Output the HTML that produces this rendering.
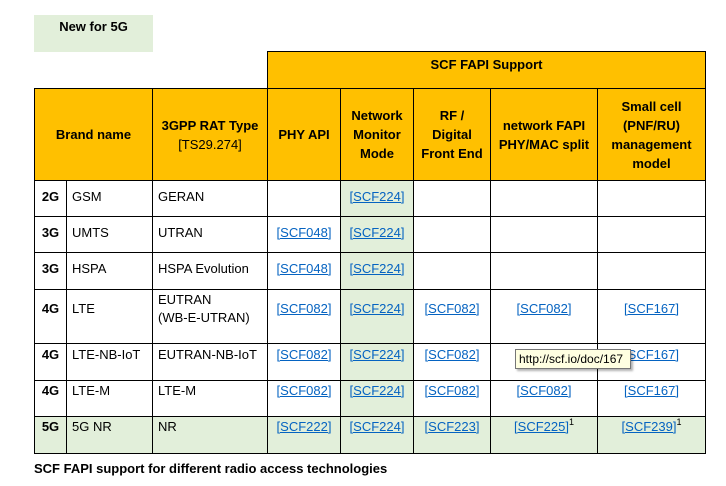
<!DOCTYPE html>
<html><head><meta charset="utf-8"><style>
body{margin:0;width:726px;height:486px;background:#fff;position:relative;overflow:hidden;font-family:"Liberation Sans",sans-serif;font-size:13px;color:#000}
.c{position:absolute;box-sizing:border-box;border:1px solid #000;padding-top:7px;text-align:center;line-height:18px}
.o{background:#ffc000;font-weight:bold}
.g{background:#e2efda}
.h{display:flex;align-items:center;justify-content:center;padding-top:0;line-height:19px}
.l{text-align:left;padding-left:5px}
.b{font-weight:bold}
a{color:#0563c1;text-decoration:underline}
sup{font-size:9px;line-height:0;vertical-align:6px;color:#000}
</style></head><body>
<div style="position:absolute;left:34px;top:15px;width:119px;height:37px;background:#e2efda;font-weight:bold;text-align:center;padding-top:4px;box-sizing:border-box">New for 5G</div>

<div class="c o" style="left:267px;top:51px;width:439px;height:38px;padding-top:4px">SCF FAPI Support</div>

<div class="c o h" style="left:34px;top:88px;width:119px;height:93px"><div>Brand name</div></div>
<div class="c o h" style="left:152px;top:88px;width:116px;height:93px"><div>3GPP RAT Type<br><span style="font-weight:normal">[TS29.274]</span></div></div>
<div class="c o h" style="left:267px;top:88px;width:74px;height:93px"><div>PHY API</div></div>
<div class="c o h" style="left:340px;top:88px;width:74px;height:93px"><div>Network<br>Monitor<br>Mode</div></div>
<div class="c o h" style="left:413px;top:88px;width:78px;height:93px"><div>RF /<br>Digital<br>Front End</div></div>
<div class="c o h" style="left:490px;top:88px;width:108px;height:93px"><div>network FAPI<br>PHY/MAC split</div></div>
<div class="c o h" style="left:597px;top:88px;width:109px;height:93px"><div>Small cell<br>(PNF/RU)<br>management<br>model</div></div>

<div class="c b" style="left:34px;top:180px;width:33px;height:37px">2G</div>
<div class="c l" style="left:66px;top:180px;width:87px;height:37px">GSM</div>
<div class="c l" style="left:152px;top:180px;width:116px;height:37px">GERAN</div>
<div class="c" style="left:267px;top:180px;width:74px;height:37px"></div>
<div class="c g" style="left:340px;top:180px;width:74px;height:37px"><a>[SCF224]</a></div>
<div class="c" style="left:413px;top:180px;width:78px;height:37px"></div>
<div class="c" style="left:490px;top:180px;width:108px;height:37px"></div>
<div class="c" style="left:597px;top:180px;width:109px;height:37px"></div>

<div class="c b" style="left:34px;top:216px;width:33px;height:37px">3G</div>
<div class="c l" style="left:66px;top:216px;width:87px;height:37px">UMTS</div>
<div class="c l" style="left:152px;top:216px;width:116px;height:37px">UTRAN</div>
<div class="c" style="left:267px;top:216px;width:74px;height:37px"><a>[SCF048]</a></div>
<div class="c g" style="left:340px;top:216px;width:74px;height:37px"><a>[SCF224]</a></div>
<div class="c" style="left:413px;top:216px;width:78px;height:37px"></div>
<div class="c" style="left:490px;top:216px;width:108px;height:37px"></div>
<div class="c" style="left:597px;top:216px;width:109px;height:37px"></div>

<div class="c b" style="left:34px;top:252px;width:33px;height:38px">3G</div>
<div class="c l" style="left:66px;top:252px;width:87px;height:38px">HSPA</div>
<div class="c l" style="left:152px;top:252px;width:116px;height:38px">HSPA Evolution</div>
<div class="c" style="left:267px;top:252px;width:74px;height:38px"><a>[SCF048]</a></div>
<div class="c g" style="left:340px;top:252px;width:74px;height:38px"><a>[SCF224]</a></div>
<div class="c" style="left:413px;top:252px;width:78px;height:38px"></div>
<div class="c" style="left:490px;top:252px;width:108px;height:38px"></div>
<div class="c" style="left:597px;top:252px;width:109px;height:38px"></div>

<div class="c b" style="left:34px;top:289px;width:33px;height:55px;padding-top:10px">4G</div>
<div class="c l" style="left:66px;top:289px;width:87px;height:55px;padding-top:10px">LTE</div>
<div class="c l" style="left:152px;top:289px;width:116px;height:55px;padding-top:1px">EUTRAN<br>(WB-E-UTRAN)</div>
<div class="c" style="left:267px;top:289px;width:74px;height:55px;padding-top:10px"><a>[SCF082]</a></div>
<div class="c g" style="left:340px;top:289px;width:74px;height:55px;padding-top:10px"><a>[SCF224]</a></div>
<div class="c" style="left:413px;top:289px;width:78px;height:55px;padding-top:10px"><a>[SCF082]</a></div>
<div class="c" style="left:490px;top:289px;width:108px;height:55px;padding-top:10px"><a>[SCF082]</a></div>
<div class="c" style="left:597px;top:289px;width:109px;height:55px;padding-top:10px"><a>[SCF167]</a></div>

<div class="c b" style="left:34px;top:343px;width:33px;height:38px;padding-top:2px">4G</div>
<div class="c l" style="left:66px;top:343px;width:87px;height:38px;padding-top:2px">LTE-NB-IoT</div>
<div class="c l" style="left:152px;top:343px;width:116px;height:38px;padding-top:2px">EUTRAN-NB-IoT</div>
<div class="c" style="left:267px;top:343px;width:74px;height:38px;padding-top:2px"><a>[SCF082]</a></div>
<div class="c g" style="left:340px;top:343px;width:74px;height:38px;padding-top:2px"><a>[SCF224]</a></div>
<div class="c" style="left:413px;top:343px;width:78px;height:38px;padding-top:2px"><a>[SCF082]</a></div>
<div class="c" style="left:490px;top:343px;width:108px;height:38px;padding-top:2px"></div>
<div class="c" style="left:597px;top:343px;width:109px;height:38px;padding-top:2px"><a>[SCF167]</a></div>

<div class="c b" style="left:34px;top:380px;width:33px;height:37px;padding-top:1px">4G</div>
<div class="c l" style="left:66px;top:380px;width:87px;height:37px;padding-top:1px">LTE-M</div>
<div class="c l" style="left:152px;top:380px;width:116px;height:37px;padding-top:1px">LTE-M</div>
<div class="c" style="left:267px;top:380px;width:74px;height:37px;padding-top:1px"><a>[SCF082]</a></div>
<div class="c g" style="left:340px;top:380px;width:74px;height:37px;padding-top:1px"><a>[SCF224]</a></div>
<div class="c" style="left:413px;top:380px;width:78px;height:37px;padding-top:1px"><a>[SCF082]</a></div>
<div class="c" style="left:490px;top:380px;width:108px;height:37px;padding-top:1px"><a>[SCF082]</a></div>
<div class="c" style="left:597px;top:380px;width:109px;height:37px;padding-top:1px"><a>[SCF167]</a></div>

<div class="c b g" style="left:34px;top:416px;width:33px;height:38px;padding-top:1px">5G</div>
<div class="c l g" style="left:66px;top:416px;width:87px;height:38px;padding-top:1px">5G NR</div>
<div class="c l g" style="left:152px;top:416px;width:116px;height:38px;padding-top:1px">NR</div>
<div class="c g" style="left:267px;top:416px;width:74px;height:38px;padding-top:1px"><a>[SCF222]</a></div>
<div class="c g" style="left:340px;top:416px;width:74px;height:38px;padding-top:1px"><a>[SCF224]</a></div>
<div class="c g" style="left:413px;top:416px;width:78px;height:38px;padding-top:1px"><a>[SCF223]</a></div>
<div class="c g" style="left:490px;top:416px;width:108px;height:38px;padding-top:1px"><a>[SCF225]</a><sup>1</sup></div>
<div class="c g" style="left:597px;top:416px;width:109px;height:38px;padding-top:1px"><a>[SCF239]</a><sup>1</sup></div>

<div style="position:absolute;left:515px;top:349px;width:116px;height:20px;box-sizing:border-box;background:#ffffe1;border:1px solid #767676;box-shadow:2px 2px 2px rgba(0,0,0,.3);font-size:12px;line-height:18px;padding-left:3px;white-space:nowrap;overflow:hidden">http://scf.io/doc/167</div>

<div style="position:absolute;left:34px;top:461px;font-weight:bold;font-size:13px">SCF FAPI support for different radio access technologies</div>
</body></html>
